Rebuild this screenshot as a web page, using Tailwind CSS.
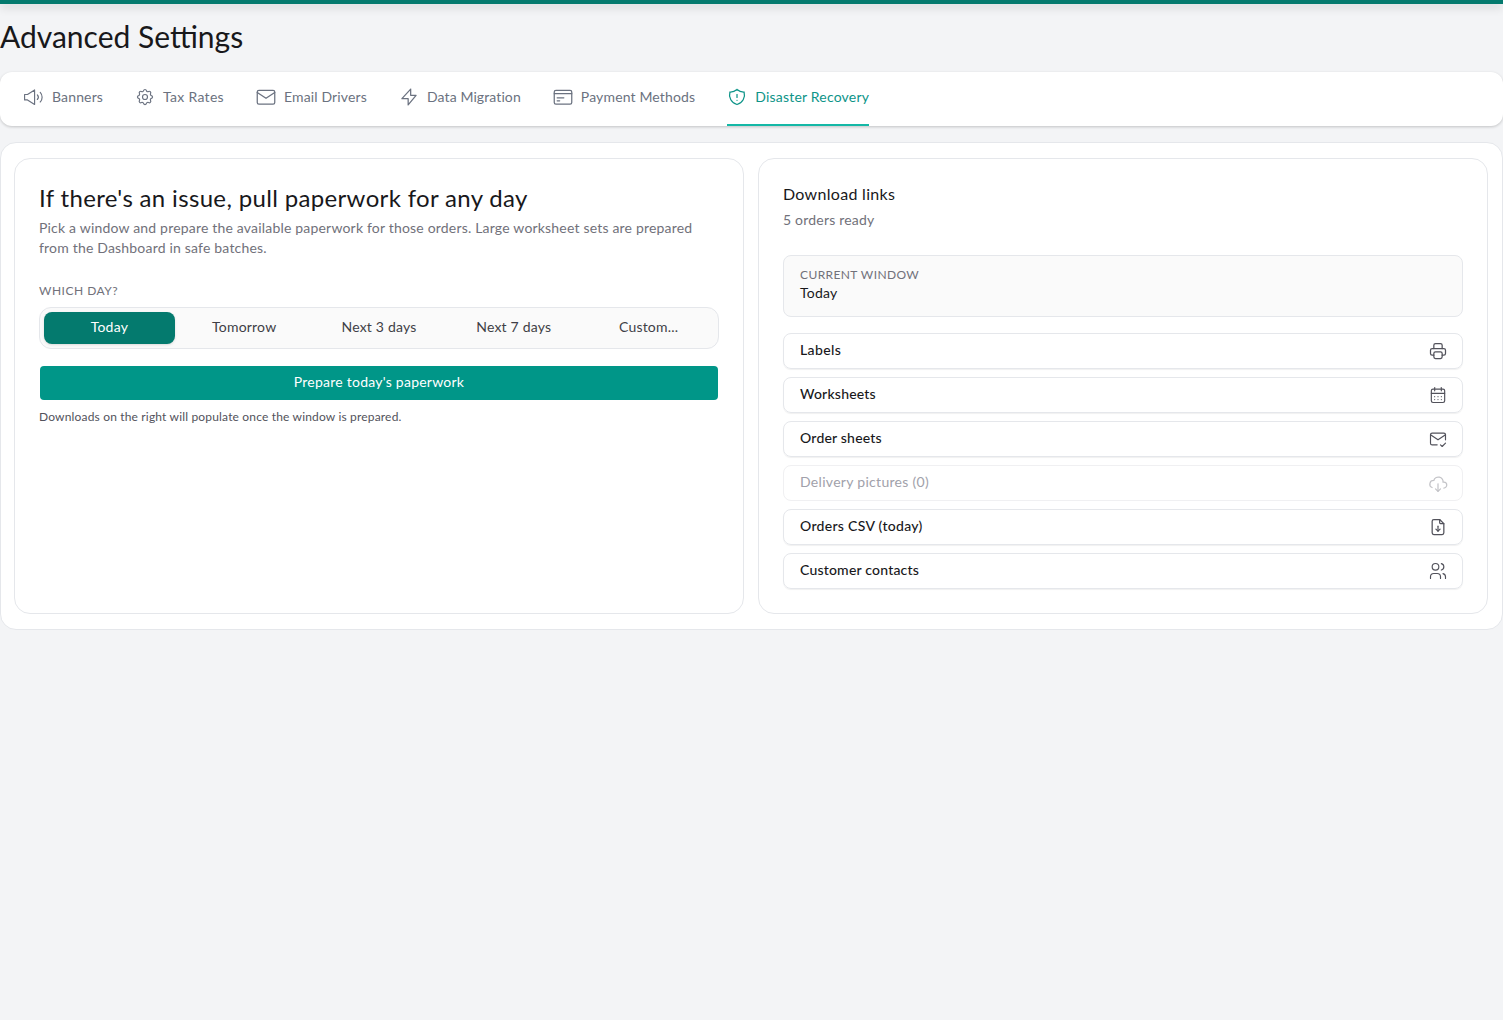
<!DOCTYPE html>
<html lang="en">
<head>
  <meta charset="UTF-8">
  <meta name="viewport" content="width=device-width, initial-scale=1.0">
  <title>Advanced Settings</title>
  <script src="https://cdn.jsdelivr.net/npm/@tailwindcss/browser@4"></script>
</head>
<body class="bg-[#f3f4f6] min-h-screen font-['Lato','Noto_Sans',sans-serif] text-[#18181b]">
  <div class="h-1 bg-[#047a6e] shadow-[0_3px_10px_rgba(0,0,0,0.18)]"></div>

  <h1 class="h-[68px] pb-[4px] flex items-center text-[30px] leading-9 font-normal">Advanced Settings</h1>

  <nav class="h-[54px] bg-white rounded-xl shadow-[0_1px_3px_rgba(0,0,0,0.2)] pl-6 flex gap-8 text-sm tracking-[0.15px] text-[#6b7280]">
    <a href="#" class="flex items-center gap-2 pb-[2px] border-b-2 border-transparent">
      <svg class="w-5 h-5" viewBox="0 0 24 24" fill="none" stroke="currentColor" stroke-width="1.4" stroke-linecap="round" stroke-linejoin="round"><path d="M.7 9v6.500h3.500L12.700 21V3.500L4.200 9H.7z"/><path d="M16 9.500a4 4 0 0 1 0 5.500"/><path d="M19.500 6.500a8.500 8.500 0 0 1 0 11.500"/></svg>
      Banners
    </a>
    <a href="#" class="flex items-center gap-2 pb-[2px] border-b-2 border-transparent tracking-[0.3px]">
      <svg class="w-5 h-5" viewBox="0 0 24 24" fill="none" stroke="currentColor" stroke-width="1.4" stroke-linecap="round" stroke-linejoin="round"><path d="M10.300 4.300c.4-1.800 3-1.800 3.400 0a1.700 1.700 0 0 0 2.600 1.100c1.500-.9 3.300.8 2.400 2.400a1.700 1.700 0 0 0 1 2.500c1.800.4 1.800 3 0 3.400a1.700 1.700 0 0 0-1 2.600c.9 1.500-.9 3.300-2.400 2.400a1.700 1.700 0 0 0-2.600 1c-.4 1.800-3 1.800-3.400 0a1.700 1.700 0 0 0-2.600-1c-1.500.9-3.300-.9-2.400-2.400a1.700 1.700 0 0 0-1-2.600c-1.800-.4-1.800-3 0-3.400a1.700 1.700 0 0 0 1-2.500c-.9-1.600.9-3.300 2.400-2.400 1 .6 2.300.1 2.600-1.100z"/><circle cx="12" cy="12" r="3"/></svg>
      Tax Rates
    </a>
    <a href="#" class="flex items-center gap-2 pb-[2px] border-b-2 border-transparent">
      <svg class="w-5 h-5" viewBox="0 0 24 24" fill="none" stroke="currentColor" stroke-width="1.5" stroke-linecap="round" stroke-linejoin="round"><rect x="1.500" y="4" width="21" height="16.500" rx="2"/><path d="M1.500 6.500l10.500 7 10.500-7"/></svg>
      Email Drivers
    </a>
    <a href="#" class="flex items-center gap-2 pb-[2px] border-b-2 border-transparent tracking-[0.1px]">
      <svg class="w-5 h-5" viewBox="0 0 24 24" fill="none" stroke="currentColor" stroke-width="1.5" stroke-linecap="round" stroke-linejoin="round"><path d="M14 2.500v7.500h6.500l-9.500 11.500v-7.500H3.500l10.500-11.500z"/></svg>
      Data Migration
    </a>
    <a href="#" class="flex items-center gap-2 pb-[2px] border-b-2 border-transparent">
      <svg class="w-5 h-5" viewBox="0 0 24 24" fill="none" stroke="currentColor" stroke-width="1.5" stroke-linecap="round" stroke-linejoin="round"><rect x="1.500" y="4" width="21" height="16.500" rx="2"/><path d="M1.500 8h21"/><path d="M5 13h8"/><path d="M5 16.500h3"/></svg>
      Payment Methods
    </a>
    <a href="#" class="flex items-center gap-2 pb-[2px] border-b-2 border-[#14b8a6] text-[#0d9488] tracking-[0.2px]">
      <svg class="w-5 h-5" viewBox="0 0 24 24" fill="none" stroke="currentColor" stroke-width="1.5" stroke-linecap="round" stroke-linejoin="round"><path d="M12 3a12 12 0 0 0 8.500 3A12 12 0 0 1 12 21 12 12 0 0 1 3.500 6 12 12 0 0 0 12 3"/><path d="M12 9v3.500"/><path d="M12 16v.01"/></svg>
      Disaster Recovery
    </a>
  </nav>

  <main class="mt-4 h-[488px] bg-white border border-[#e5e7eb] rounded-2xl pl-[13px] pr-[14px] py-[15px] grid grid-cols-[730px_1fr] gap-[14px]">
    <section class="border border-[#e5e7eb] rounded-2xl px-6 pt-[23px]">
      <h2 class="text-2xl leading-8 font-normal tracking-[0.34px]">If there's an issue, pull paperwork for any day</h2>
      <p class="text-sm leading-5 tracking-[0.19px] text-[#71717a] mt-[4px]">Pick a window and prepare the available paperwork for those orders. Large worksheet sets are prepared from the Dashboard in safe batches.</p>
      <div class="mt-[25px] text-xs leading-4 tracking-[0.5px] text-[#71717a] uppercase">Which day?</div>
      <div class="mt-2 h-[42px] border border-[#e5e7eb] rounded-xl bg-[#fafafa] p-1 grid grid-cols-5 gap-1 text-sm tracking-[0.2px] text-[#3f3f46]">
        <button class="pb-[2px] rounded-lg bg-[#047a6e] text-white shadow-sm">Today</button>
        <button class="pb-[2px]">Tomorrow</button>
        <button class="pb-[2px]">Next 3 days</button>
        <button class="pb-[2px]">Next 7 days</button>
        <button class="pb-[2px]">Custom...</button>
      </div>
      <button class="mt-[17px] mx-[1px] w-[678px] h-[34px] pb-[2px] rounded bg-[#009688] text-white text-sm tracking-[0.24px]">Prepare today's paperwork</button>
      <p class="mt-[9px] text-xs leading-4 tracking-[0.17px] text-[#52525b]">Downloads on the right will populate once the window is prepared.</p>
    </section>

    <section class="border border-[#e5e7eb] rounded-2xl px-6 pt-[23px]">
      <h3 class="text-base leading-6 tracking-[0.3px]">Download links</h3>
      <p class="text-sm leading-5 tracking-[0.2px] text-[#71717a] mt-[4px]">5 orders ready</p>
      <div class="mt-[25px] h-[62px] border border-[#e5e7eb] rounded-lg bg-[#fafafa] px-4 pt-[11px]">
        <div class="text-xs leading-4 tracking-[0.4px] text-[#71717a] uppercase">Current window</div>
        <div class="text-sm leading-5 tracking-[0.2px]">Today</div>
      </div>
      <div class="mt-4 flex flex-col gap-2 text-sm font-medium tracking-[0.2px]">
        <a href="#" class="h-9 pl-4 pr-[14px] flex items-center justify-between border border-[#e5e7eb] rounded-lg shadow-[0_1px_1px_rgba(0,0,0,0.06)]">
          <span class="pb-[2px] tracking-[0.4px]">Labels</span>
          <svg class="w-5 h-5 text-[#52525b]" viewBox="0 0 24 24" fill="none" stroke="currentColor" stroke-width="1.5" stroke-linecap="round" stroke-linejoin="round"><path d="M17 17h2a2 2 0 0 0 2-2v-4a2 2 0 0 0-2-2H5a2 2 0 0 0-2 2v4a2 2 0 0 0 2 2h2"/><path d="M17 9V5a2 2 0 0 0-2-2H9a2 2 0 0 0-2 2v4"/><rect x="7" y="13" width="10" height="8" rx="2"/></svg>
        </a>
        <a href="#" class="h-9 pl-4 pr-[14px] flex items-center justify-between border border-[#e5e7eb] rounded-lg shadow-[0_1px_1px_rgba(0,0,0,0.06)]">
          <span class="pb-[2px]">Worksheets</span>
          <svg class="w-5 h-5 text-[#52525b]" viewBox="0 0 24 24" fill="none" stroke="currentColor" stroke-width="1.4" stroke-linecap="round" stroke-linejoin="round"><rect x="4" y="5" width="16" height="16" rx="2"/><path d="M16 3v4"/><path d="M8 3v4"/><path d="M4 10h16"/><path d="M8 14h.01M12 14h.01M16 14h.01M8 17.500h.01M12 17.500h.01M16 17.500h.01"/></svg>
        </a>
        <a href="#" class="h-9 pl-4 pr-[14px] flex items-center justify-between border border-[#e5e7eb] rounded-lg shadow-[0_1px_1px_rgba(0,0,0,0.06)]">
          <span class="pb-[2px]">Order sheets</span>
          <svg class="w-5 h-5 text-[#52525b]" viewBox="0 0 24 24" fill="none" stroke="currentColor" stroke-width="1.4" stroke-linecap="round" stroke-linejoin="round"><path d="M11 19H5a2 2 0 0 1-2-2V7a2 2 0 0 1 2-2h14a2 2 0 0 1 2 2v6"/><path d="M3 7l9 6 9-6"/><path d="M15 19l2 2 4-4"/></svg>
        </a>
        <a href="#" class="h-9 pl-4 pr-[14px] flex items-center justify-between border border-[#f0f0f2] rounded-lg font-normal tracking-[0.3px] text-[#a1a1aa]">
          <span class="pb-[2px]">Delivery pictures (0)</span>
          <svg class="w-5 h-5 text-[#c4c4c8]" viewBox="0 0 24 24" fill="none" stroke="currentColor" stroke-width="1.5" stroke-linecap="round" stroke-linejoin="round"><path d="M19 18a3.500 3.500 0 0 0 0-7h-1a5 4.500 0 0 0-11-2 4.600 4.400 0 0 0-2.100 8.400"/><path d="M12 13v9"/><path d="M9 19l3 3 3-3"/></svg>
        </a>
        <a href="#" class="h-9 pl-4 pr-[14px] flex items-center justify-between border border-[#e5e7eb] rounded-lg shadow-[0_1px_1px_rgba(0,0,0,0.06)]">
          <span class="pb-[2px] tracking-[0.3px]">Orders CSV (today)</span>
          <svg class="w-5 h-5 text-[#52525b]" viewBox="0 0 24 24" fill="none" stroke="currentColor" stroke-width="1.5" stroke-linecap="round" stroke-linejoin="round"><path d="M14 3v4a1 1 0 0 0 1 1h4"/><path d="M17 21H7a2 2 0 0 1-2-2V5a2 2 0 0 1 2-2h7l5 5v11a2 2 0 0 1-2 2z"/><path d="M12 11v6"/><path d="M9.500 14.500L12 17l2.500-2.500"/></svg>
        </a>
        <a href="#" class="h-9 pl-4 pr-[14px] flex items-center justify-between border border-[#e5e7eb] rounded-lg shadow-[0_1px_1px_rgba(0,0,0,0.06)]">
          <span class="pb-[2px]">Customer contacts</span>
          <svg class="w-5 h-5 text-[#52525b]" viewBox="0 0 24 24" fill="none" stroke="currentColor" stroke-width="1.4" stroke-linecap="round" stroke-linejoin="round"><circle cx="9" cy="7" r="4"/><path d="M3 21v-2a4 4 0 0 1 4-4h4a4 4 0 0 1 4 4v2"/><path d="M16 3.100a4 4 0 0 1 0 7.750"/><path d="M21 21v-2a4 4 0 0 0-3-3.850"/></svg>
        </a>
      </div>
    </section>
  </main>
</body>
</html>
